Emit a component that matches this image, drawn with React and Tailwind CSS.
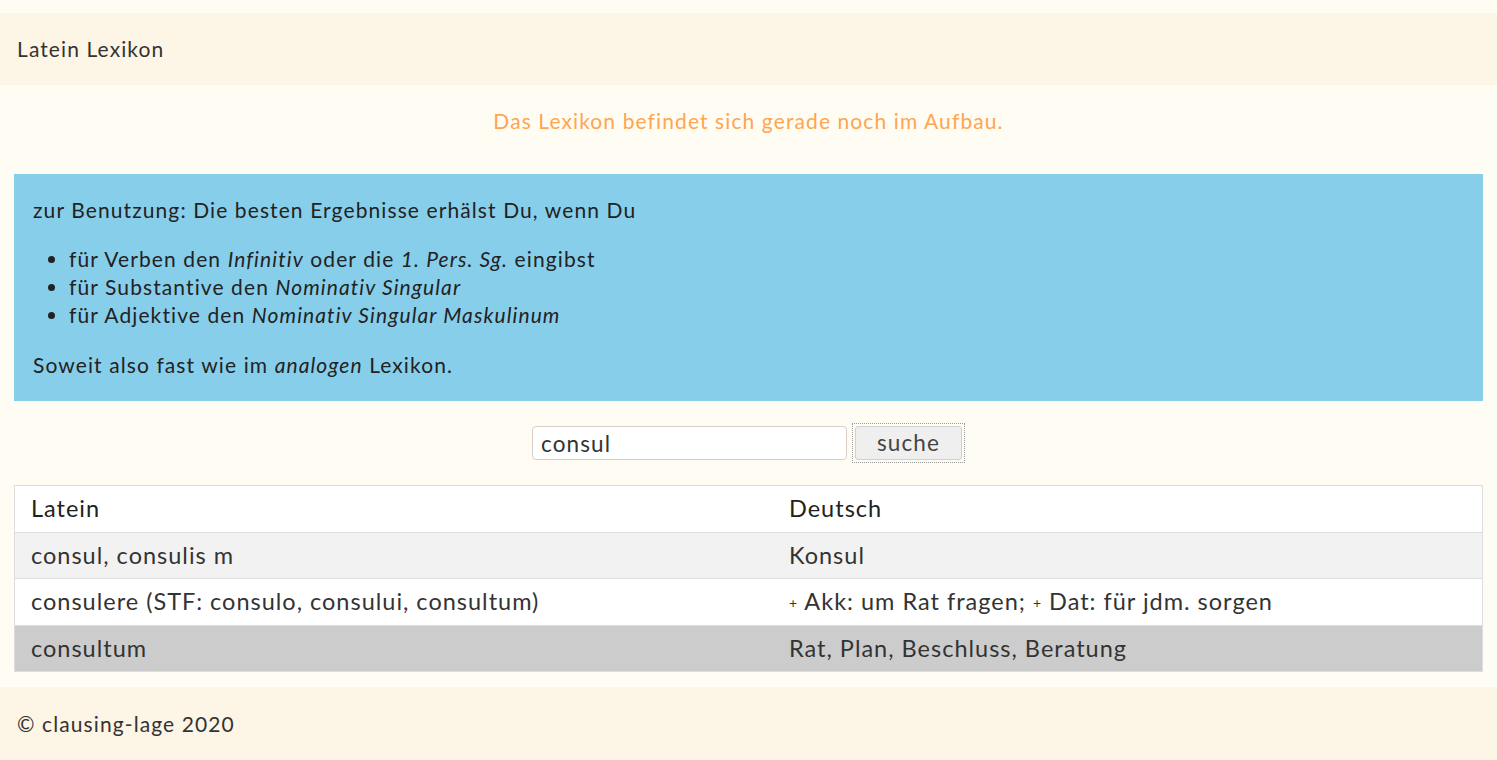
const Plus = () => <span className="text-[14px] align-[2px]">+</span>

const ROWS = [
  ['consul, consulis m', 'Konsul', 'bg-[#f2f2f2]'],
  ['consulere (STF: consulo, consului, consultum)', <><Plus /> Akk: um Rat fragen; <Plus /> Dat: für jdm. sorgen</>, 'bg-white'],
  ['consultum', 'Rat, Plan, Beschluss, Beratung', 'bg-[#cccccc]'],
]

export default function App() {
  return (
    <div className="min-h-[760px] bg-[#fffcf3] pt-[13px] text-[#222] font-['Lato',sans-serif] text-[21px] tracking-[1.1px]">
      {/* Kopfzeile */}
      <header className="h-[72px] bg-[#fdf5e6] flex items-center px-[17px]">
        <span className="text-[#333]">Latein Lexikon</span>
      </header>

      <p className="text-center text-[#ffa54f] mt-[23px] mb-[40px] leading-[26px]">
        Das Lexikon befindet sich gerade noch im Aufbau.
      </p>

      {/* Hinweise */}
      <div className="mx-[14px] bg-[#87ceeb] px-[19px] pt-[22px] pb-[22px] leading-[28px] text-[#222]">
        <p>zur Benutzung: Die besten Ergebnisse erhälst Du, wenn Du</p>
        <ul className="list-disc pl-[36px] mt-[21px] mb-[22px]">
          <li>für Verben den <i>Infinitiv</i> oder die <i>1. Pers. Sg.</i> eingibst</li>
          <li>für Substantive den <i>Nominativ Singular</i></li>
          <li>für Adjektive den <i>Nominativ Singular Maskulinum</i></li>
        </ul>
        <p>Soweit also fast wie im <i>analogen</i> Lexikon.</p>
      </div>

      {/* Suche */}
      <div className="flex justify-center items-center gap-[5px] mt-[22px] mb-[22px] text-[22.5px]">
        <input
          defaultValue="consul"
          className="w-[315px] h-[34px] bg-white border border-[#d8cfc8] rounded-[4px] px-[8px] text-[#333] outline-none"
        />
        <div className="border border-dotted border-[#999] p-[2px]">
          <button className="w-[107px] h-[34px] bg-[#efefef] border border-[#d0d0d0] rounded-[3px] text-[#444] leading-none">
            suche
          </button>
        </div>
      </div>

      {/* Ergebnisse */}
      <div className="mx-[14px] border border-[#ddd] text-[23.5px] tracking-[1px] text-[#222]">
        <div className="grid grid-cols-[758px_1fr] bg-white h-[46.5px] items-center border-b border-[#ddd]">
          <div className="px-[16px]">Latein</div>
          <div className="px-[16px]">Deutsch</div>
        </div>
        {ROWS.map(([la, de, bg], i) => (
          <div key={i} className={`grid grid-cols-[758px_1fr] items-center ${bg} ${i < ROWS.length - 1 ? 'h-[46.5px] border-b border-[#ddd]' : 'h-[45.5px]'}`}>
            <div className="px-[16px] text-[#333]">{la}</div>
            <div className="px-[16px] text-[#333]">{de}</div>
          </div>
        ))}
      </div>

      <footer className="mt-[15px] h-[73px] bg-[#fdf5e6] flex items-center px-[17px] text-[#333]">
        © clausing-lage 2020
      </footer>
    </div>
  )
}
